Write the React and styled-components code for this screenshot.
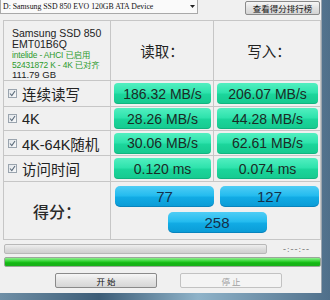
import React from "react";
import styled, { createGlobalStyle } from "styled-components";

const GlobalStyle = createGlobalStyle`
  html, body {
    margin: 0;
    padding: 0;
    width: 330px;
    height: 300px;
    overflow: hidden;
    background: linear-gradient(90deg, #6f8fa6 0%, #3d5d77 30%, #8fb3c9 60%, #4f6f8a 100%);
    font-family: "Liberation Sans", "Noto Sans CJK SC", sans-serif;
  }
`;

const rows = [
  { label: "连续读写", read: "186.32 MB/s", write: "206.07 MB/s" },
  { label: "4K", read: "28.26 MB/s", write: "44.28 MB/s" },
  { label: "4K-64K随机", read: "30.06 MB/s", write: "62.61 MB/s" },
  { label: "访问时间", read: "0.120 ms", write: "0.074 ms" },
];

const App = () => {
  return (
    <>
      <GlobalStyle />
      <Desktop>
        <Window>
          <TopBar>
            <DriveSelect>
              <span>D: Samsung SSD 850 EVO 120GB ATA Device</span>
              <SelectArrow>
                <svg width="5" height="3" viewBox="0 0 5 3">
                  <path d="M0 0h5L2.5 3z" fill="#222" />
                </svg>
              </SelectArrow>
            </DriveSelect>
            <RankButton>查看得分排行榜</RankButton>
          </TopBar>

          <ResultTable>
            <InfoCell>
              <InfoLine>Samsung SSD 850</InfoLine>
              <InfoLine $tight>EMT01B6Q</InfoLine>
              <InfoGreen>intelide - AHCI 已启用</InfoGreen>
              <InfoGreen>52431872 K - 4K 已对齐</InfoGreen>
              <InfoSmall>111.79 GB</InfoSmall>
            </InfoCell>
            <HeadCell>读取：</HeadCell>
            <HeadCell $last>写入：</HeadCell>

            {rows.map((r, id) => (
              <React.Fragment key={id}>
                <LabelCell>
                  <CheckBox>
                    <svg width="7" height="7" viewBox="0 0 7 7">
                      <path d="M1 3.5l1.8 2L6 1" stroke="#5a6a7a" strokeWidth="1.1" fill="none" />
                    </svg>
                  </CheckBox>
                  <span>{r.label}</span>
                </LabelCell>
                <ValueCell>
                  <GreenBox>{r.read}</GreenBox>
                </ValueCell>
                <ValueCell $last>
                  <GreenBox>{r.write}</GreenBox>
                </ValueCell>
              </React.Fragment>
            ))}

            <ScoreLabel>得分：</ScoreLabel>
            <ScoreArea>
              <BlueBox>77</BlueBox>
              <BlueBox>127</BlueBox>
              <BlueBox $center>258</BlueBox>
            </ScoreArea>
          </ResultTable>

          <ProgressRow>
            <GrayBar />
            <TimeText>-:--:--</TimeText>
          </ProgressRow>
          <GreenBar />

          <ButtonRow>
            <ActionButton>开 始</ActionButton>
            <ActionButton disabled>停 止</ActionButton>
          </ButtonRow>
        </Window>
      </Desktop>
    </>
  );
};

export default App;

const Desktop = styled.div`
  width: 330px;
  height: 300px;
`;

const Window = styled.div`
  width: 322px;
  height: 293px;
  background: #f0f0f0;
  border-right: 1px solid #9aa4ae;
  box-sizing: border-box;
  display: flex;
  flex-direction: column;
`;

const TopBar = styled.div`
  display: flex;
  justify-content: space-between;
  align-items: flex-start;
  height: 20px;
`;

const DriveSelect = styled.div`
  width: 198px;
  height: 14px;
  box-sizing: border-box;
  border: 1px solid #a9a9a9;
  border-top: none;
  background: #fafafa;
  display: flex;
  align-items: center;
  justify-content: space-between;
  padding-left: 2px;
  font-family: "Liberation Serif", serif;
  font-size: 7.8px;
  color: #111;
  white-space: nowrap;
  overflow: hidden;
`;

const SelectArrow = styled.div`
  width: 10px;
  height: 12px;
  display: flex;
  align-items: center;
  justify-content: center;
`;

const RankButton = styled.div`
  margin-top: 1px;
  margin-right: 1px;
  width: 75px;
  height: 14px;
  box-sizing: border-box;
  border: 1px solid #8a8a8a;
  border-radius: 2px;
  background: linear-gradient(#f6f6f6, #e2e2e2 50%, #d4d4d4);
  display: flex;
  align-items: center;
  justify-content: center;
  font-size: 8.5px;
  color: #111;
  font-family: "Noto Sans CJK SC", sans-serif;
`;

const ResultTable = styled.div`
  margin-left: 3px;
  width: 318px;
  display: grid;
  grid-template-columns: 107px 103px 106px;
  grid-template-rows: 60px 26px 24px 25px 26px 57px;
  border: 1px solid #c6c6c6;
  box-sizing: border-box;
`;

const InfoCell = styled.div`
  border-right: 1px solid #c6c6c6;
  border-bottom: 1px solid #c6c6c6;
  padding: 6px 0 0 8px;
  display: flex;
  flex-direction: column;
`;

const InfoLine = styled.div`
  font-size: 10.5px;
  line-height: ${(p) => (p.$tight ? "11px" : "12px")};
  color: #222;
`;

const InfoGreen = styled.div`
  font-size: 8.4px;
  line-height: 10px;
  color: #2c9a2c;
  font-family: "Liberation Sans", "Noto Sans CJK SC", sans-serif;
  letter-spacing: -0.15px;
  white-space: nowrap;
`;

const InfoSmall = styled.div`
  font-size: 9.5px;
  line-height: 10px;
  color: #222;
`;

const HeadCell = styled.div`
  border-right: ${(p) => (p.$last ? "none" : "1px solid #c6c6c6")};
  border-bottom: 1px solid #c6c6c6;
  display: flex;
  align-items: center;
  justify-content: center;
  font-size: 14.5px;
  color: #222;
  font-family: "Noto Sans CJK SC", sans-serif;
  padding-left: ${(p) => (p.$last ? "4px" : "0")};
`;

const LabelCell = styled.div`
  border-right: 1px solid #c6c6c6;
  border-bottom: 1px solid #c6c6c6;
  display: flex;
  align-items: center;
  gap: 5px;
  padding-left: 4px;
  font-size: 14.5px;
  color: #222;
  font-family: "Liberation Sans", "Noto Sans CJK SC", sans-serif;
`;

const CheckBox = styled.div`
  width: 9px;
  height: 9px;
  box-sizing: border-box;
  border: 1px solid #9aa4ae;
  background: linear-gradient(135deg, #e2e6ea, #f8f9fa);
  display: flex;
  align-items: center;
  justify-content: center;
`;

const ValueCell = styled.div`
  border-right: ${(p) => (p.$last ? "none" : "1px solid #c6c6c6")};
  border-bottom: 1px solid #c6c6c6;
  display: flex;
  align-items: center;
  padding: 0 2px 0 3px;
`;

const GreenBox = styled.div`
  flex: 1;
  height: 21px;
  border-radius: 4px;
  background: linear-gradient(#52efc0 0%, #2fe3ad 45%, #1bd59b 55%, #16c98f 100%);
  box-shadow: inset 0 -1px 0 rgba(0, 120, 80, 0.25);
  display: flex;
  align-items: center;
  justify-content: center;
  font-size: 14px;
  color: #1b2b26;
`;

const ScoreLabel = styled.div`
  border-right: 1px solid #c6c6c6;
  display: flex;
  align-items: center;
  justify-content: center;
  font-size: 16px;
  font-weight: 500;
  color: #2a2a2a;
  font-family: "Noto Sans CJK SC", sans-serif;
`;

const ScoreArea = styled.div`
  grid-column: 2 / 4;
  display: grid;
  grid-template-columns: 99px 99px;
  column-gap: 6px;
  row-gap: 5px;
  align-content: start;
  padding: 4px 0 0 4px;
`;

const BlueBox = styled.div`
  grid-column: ${(p) => (p.$center ? "1 / 3" : "auto")};
  justify-self: ${(p) => (p.$center ? "center" : "stretch")};
  width: ${(p) => (p.$center ? "99px" : "auto")};
  height: 21px;
  border-radius: 5px;
  background: linear-gradient(#4fcdf5 0%, #25bcef 45%, #11aae4 55%, #0a9bd5 100%);
  box-shadow: inset 0 -1px 0 rgba(0, 60, 120, 0.25);
  display: flex;
  align-items: center;
  justify-content: center;
  font-size: 15px;
  color: #15304a;
`;

const ProgressRow = styled.div`
  display: flex;
  align-items: center;
  margin-top: 3px;
  padding-left: 4px;
  height: 12px;
`;

const GrayBar = styled.div`
  width: 263px;
  height: 10px;
  box-sizing: border-box;
  border: 1px solid #b8b8b8;
  border-radius: 2px;
  background: linear-gradient(#eeeeee, #d9d9d9 60%, #cfcfcf);
`;

const TimeText = styled.div`
  margin-left: 16px;
  font-size: 9px;
  color: #666;
  font-family: "Liberation Serif", serif;
  letter-spacing: 1px;
`;

const GreenBar = styled.div`
  margin: 2px 0 0 4px;
  width: 317px;
  height: 10px;
  box-sizing: border-box;
  border: 1px solid #9aa89a;
  border-radius: 2px;
  background: linear-gradient(#8ef08e 0%, #2ccf2c 45%, #13b813 60%, #1ab01a 100%);
`;

const ButtonRow = styled.div`
  display: flex;
  gap: 23px;
  padding-left: 55px;
  margin-top: 6px;
`;

const ActionButton = styled.div`
  width: 102px;
  height: 15px;
  box-sizing: border-box;
  border: 1px solid ${(p) => (p.disabled ? "#c2c2c2" : "#8a8a8a")};
  border-radius: 2px;
  background: ${(p) =>
    p.disabled ? "#f4f4f4" : "linear-gradient(#f6f6f6, #e4e4e4 50%, #d6d6d6)"};
  display: flex;
  align-items: center;
  justify-content: center;
  font-size: 8.5px;
  color: ${(p) => (p.disabled ? "#a0a0a0" : "#111")};
  font-family: "Noto Sans CJK SC", sans-serif;
  white-space: pre;
`;
